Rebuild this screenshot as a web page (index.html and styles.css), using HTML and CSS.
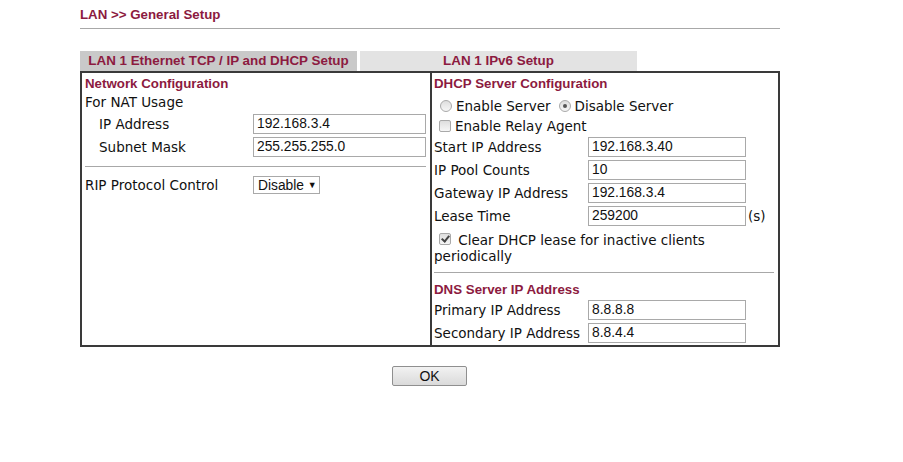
FILE: index.html
```html
<!DOCTYPE html>
<html lang="en">
<head>
    <meta charset="UTF-8">
    <title>LAN General Setup</title>
    <link rel="stylesheet" href="styles.css">
</head>
<body>
    <div class="page">
        <div class="title">LAN &gt;&gt; General Setup</div>
        <div class="rule"></div>

        <div class="tabs">
            <div class="tab active">LAN 1 Ethernet TCP / IP and DHCP Setup</div>
            <div class="tab">LAN 1 IPv6 Setup</div>
        </div>

        <div class="panel">
            <div class="col left">
                <div class="heading">Network Configuration</div>
                <div class="text-row">For NAT Usage</div>
                <div class="field indent">
                    <span class="label">IP Address</span>
                    <input type="text" class="box wide" value="192.168.3.4">
                </div>
                <div class="field indent">
                    <span class="label">Subnet Mask</span>
                    <input type="text" class="box wide" value="255.255.255.0">
                </div>
                <div class="divider"></div>
                <div class="field">
                    <span class="label">RIP Protocol Control</span>
                    <span class="select">Disable <span class="arrow">&#9660;</span></span>
                </div>
            </div>

            <div class="col right">
                <div class="heading">DHCP Server Configuration</div>
                <div class="option-row radios">
                    <label><input type="radio" name="dhcp"> Enable Server</label>
                    <label><input type="radio" name="dhcp" checked> Disable Server</label>
                </div>
                <div class="option-row relay">
                    <label><input type="checkbox"> Enable Relay Agent</label>
                </div>
                <div class="field">
                    <span class="label">Start IP Address</span>
                    <input type="text" class="box" value="192.168.3.40">
                </div>
                <div class="field">
                    <span class="label">IP Pool Counts</span>
                    <input type="text" class="box" value="10">
                </div>
                <div class="field">
                    <span class="label">Gateway IP Address</span>
                    <input type="text" class="box" value="192.168.3.4">
                </div>
                <div class="field">
                    <span class="label">Lease Time</span>
                    <input type="text" class="box" value="259200">
                    <span class="unit">(s)</span>
                </div>
                <div class="clear-row">
                    <input type="checkbox" checked> Clear DHCP lease for inactive clients periodically
                </div>
                <div class="divider"></div>
                <div class="heading">DNS Server IP Address</div>
                <div class="field">
                    <span class="label">Primary IP Address</span>
                    <input type="text" class="box" value="8.8.8.8">
                </div>
                <div class="field">
                    <span class="label">Secondary IP Address</span>
                    <input type="text" class="box" value="8.8.4.4">
                </div>
            </div>
        </div>

        <div class="actions">
            <button>OK</button>
        </div>
    </div>
</body>
</html>
```

FILE: styles.css
```css
:root {
    --maroon: #8c1a40;
    --border-dark: #3a3a3a;
    --input-border: #a9a9a9;
}

body {
    margin: 0;
    background: #fff;
    color: #111;
    font-family: "DejaVu Sans", Verdana, sans-serif;
    font-size: 13.5px;
}

.page {
    width: 700px;
    padding: 6px 0 0 80px;
}

.title {
    font-family: "Liberation Sans", Arial, sans-serif;
    font-weight: bold;
    font-size: 13.3px;
    color: var(--maroon);
    line-height: 17px;
}

.rule {
    height: 1px;
    background: #a8a8a8;
    margin: 5px 0 0 0;
}

.tabs {
    display: flex;
    gap: 3px;
    margin-top: 22px;
}

.tab {
    width: 277px;
    height: 20px;
    line-height: 20px;
    text-align: center;
    background: #e3e3e3;
    color: var(--maroon);
    font-family: "Liberation Sans", Arial, sans-serif;
    font-weight: bold;
    font-size: 13.4px;
}

.tab.active {
    background: #c9c9c9;
}

.panel {
    display: grid;
    grid-template-columns: 348px 1fr;
    border: 2px solid var(--border-dark);
    height: 276px;
    box-sizing: border-box;
}

.col {
    padding: 3px 4px 0 3px;
}

.col.right {
    border-left: 2px solid var(--border-dark);
    padding-left: 2px;
}

.heading {
    font-family: "Liberation Sans", Arial, sans-serif;
    font-weight: bold;
    font-size: 13.3px;
    color: var(--maroon);
    line-height: 16px;
}

.text-row {
    height: 20px;
    line-height: 20px;
}

.field {
    display: flex;
    align-items: center;
    height: 23px;
}

.field .label {
    width: 154px;
    flex-shrink: 0;
}

.left .field .label {
    width: 168px;
}

.left .field.indent .label {
    padding-left: 14px;
    width: 154px;
}

.box {
    box-sizing: border-box;
    width: 158px;
    height: 20px;
    border: 1px solid var(--input-border);
    padding: 0 3px;
    font-family: "Liberation Sans", Arial, sans-serif;
    font-size: 13.8px;
    color: #111;
    background: #fff;
}

.box.wide {
    width: 173px;
}

.unit {
    margin-left: 2px;
}

.divider {
    height: 1px;
    background: #a8a8a8;
    margin: 8px 0 9px 0;
}

.left .divider {
    margin-bottom: 6px;
}

.select {
    display: inline-block;
    box-sizing: border-box;
    width: 67px;
    height: 18px;
    line-height: 16px;
    border: 1px solid var(--input-border);
    padding-left: 4px;
    font-family: "Liberation Sans", Arial, sans-serif;
    font-size: 13.8px;
}

.select .arrow {
    font-size: 9px;
    vertical-align: 2px;
}

.option-row {
    display: flex;
    align-items: center;
    padding-left: 6px;
}

.option-row.radios {
    height: 23px;
    margin-top: 2px;
}

.option-row.relay {
    height: 18px;
    padding-left: 5px;
}

.option-row label {
    display: flex;
    align-items: center;
    margin-right: 8px;
}

input[type="radio"],
input[type="checkbox"] {
    appearance: none;
    -webkit-appearance: none;
    width: 12px;
    height: 12px;
    margin: 0 4px 0 0;
    border: 1px solid #a9a9a9;
    background: linear-gradient(#dedede, #f6f6f6);
    position: relative;
    box-sizing: border-box;
}

input[type="radio"] {
    border-radius: 50%;
}

input[type="radio"]:checked::after {
    content: '';
    position: absolute;
    left: 3px;
    top: 3px;
    width: 4px;
    height: 4px;
    border-radius: 50%;
    background: #555;
}

input[type="checkbox"] {
    border-radius: 2px;
}

input[type="checkbox"]:checked::after {
    content: '';
    position: absolute;
    left: 3px;
    top: 0px;
    width: 3px;
    height: 6px;
    border: solid #444;
    border-width: 0 2px 2px 0;
    transform: rotate(40deg);
}

.clear-row {
    margin-top: 5px;
    line-height: 16px;
    padding-right: 30px;
}

.clear-row input {
    margin: 0 3px 0 5px;
    vertical-align: 0;
}

.actions {
    padding: 19px 0 0 312px;
}

button {
    width: 75px;
    height: 20px;
    border: 1px solid #8f8f8f;
    border-radius: 2px;
    background: linear-gradient(#f2f2f2, #dadada);
    font-family: "Liberation Sans", Arial, sans-serif;
    font-size: 14px;
    color: #111;
    padding: 0;
}
```
